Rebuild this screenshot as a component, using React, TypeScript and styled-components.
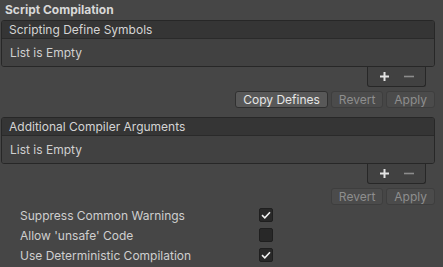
import styled, { createGlobalStyle } from "styled-components";

const Global = createGlobalStyle`
  html, body {
    margin: 0;
    background: #464646;
  }
  body {
    font-family: Inter, "Noto Sans", sans-serif;
    font-size: 12px;
    color: #d2d2d2;
  }
`;

const Panel = styled.div`
  width: 443px;
  height: 267px;
  padding: 2px 8px 0 1px;
  box-sizing: border-box;
  overflow: hidden;
`;

const Title = styled.div`
  font-weight: 700;
  font-size: 12px;
  color: #d8d8d8;
  padding-left: 4px;
  height: 18px;
  line-height: 15px;
`;

const List = styled.div`
  display: flex;
  flex-direction: column;
`;

const ListBox = styled.div`
  border: 1px solid #272727;
  border-radius: 3px;
  overflow: hidden;
`;

const ListHeader = styled.div`
  height: 17px;
  line-height: 17px;
  background: #353535;
  border-bottom: 1px solid #2a2a2a;
  padding-left: 7px;
  color: #d4d4d4;
`;

const ListBody = styled.div`
  height: 27px;
  line-height: 27px;
  background: #414141;
  padding-left: 8px;
  color: #d0d0d0;
`;

const Footer = styled.div`
  align-self: flex-end;
  margin-right: 9px;
  width: 59px;
  height: 20px;
  background: #414141;
  border: 1px solid #272727;
  border-top: none;
  border-radius: 0 0 3px 3px;
  display: flex;
  align-items: center;
  gap: 15px;
  padding-left: 12px;
  box-sizing: border-box;
`;

const ButtonRow = styled.div`
  display: flex;
  justify-content: flex-end;
  gap: 3px;
  margin-top: 4px;
`;

const Button = styled.div<{ $disabled?: boolean }>`
  height: 17px;
  line-height: 16px;
  padding: 0 7px;
  border-radius: 3px;
  border: 1px solid ${(p) => (p.$disabled ? "#3e3e3e" : "#303030")};
  background: ${(p) => (p.$disabled ? "#4b4b4b" : "#585858")};
  color: ${(p) => (p.$disabled ? "#8e8e8e" : "#e6e6e6")};
  box-sizing: border-box;
  font-size: 12px;
`;

const Spacer = styled.div<{ $h: number }>`
  height: ${(p) => p.$h}px;
`;

const Toggles = styled.div`
  display: flex;
  flex-direction: column;
  padding-left: 19px;
`;

const ToggleRow = styled.div`
  display: grid;
  grid-template-columns: 239px 14px;
  align-items: center;
  height: 20px;
  color: #cfcfcf;
`;

const Box = styled.div`
  width: 14px;
  height: 14px;
  border-radius: 2px;
  background: #282828;
  border: 1px solid #1f1f1f;
  box-sizing: border-box;
  display: flex;
  align-items: center;
  justify-content: center;
`;

function Check({ on }: { on: boolean }) {
  return (
    <Box>
      {on && (
        <svg width="10" height="8" viewBox="0 0 10 8">
          <path d="M1 4.2 L3.8 6.8 L9 1.2" fill="none" stroke="#f0f0f0" strokeWidth="1.6" />
        </svg>
      )}
    </Box>
  );
}

function PlusIcon() {
  return (
    <svg width="9" height="9" viewBox="0 0 9 9">
      <path d="M4.5 0 V9 M0 4.5 H9" stroke="#e4e4e4" strokeWidth="2" />
    </svg>
  );
}

function MinusIcon() {
  return (
    <svg width="10" height="9" viewBox="0 0 10 9">
      <path d="M0 4.5 H10" stroke="#8c8c8c" strokeWidth="1.6" />
    </svg>
  );
}

function ReorderList({ title }: { title: string }) {
  return (
    <List>
      <ListBox>
        <ListHeader>{title}</ListHeader>
        <ListBody>List is Empty</ListBody>
      </ListBox>
      <Footer>
        <PlusIcon />
        <MinusIcon />
      </Footer>
    </List>
  );
}

export default function App() {
  return (
    <>
      <Global />
      <Panel>
        <Title>Script Compilation</Title>
        <ReorderList title="Scripting Define Symbols" />
        <ButtonRow>
          <Button>Copy Defines</Button>
          <Button $disabled>Revert</Button>
          <Button $disabled>Apply</Button>
        </ButtonRow>
        <Spacer $h={9} />
        <ReorderList title="Additional Compiler Arguments" />
        <ButtonRow>
          <Button $disabled>Revert</Button>
          <Button $disabled>Apply</Button>
        </ButtonRow>
        <Toggles>
          <ToggleRow>
            <span>Suppress Common Warnings</span>
            <Check on />
          </ToggleRow>
          <ToggleRow>
            <span>Allow 'unsafe' Code</span>
            <Check on={false} />
          </ToggleRow>
          <ToggleRow>
            <span>Use Deterministic Compilation</span>
            <Check on />
          </ToggleRow>
        </Toggles>
      </Panel>
    </>
  );
}
